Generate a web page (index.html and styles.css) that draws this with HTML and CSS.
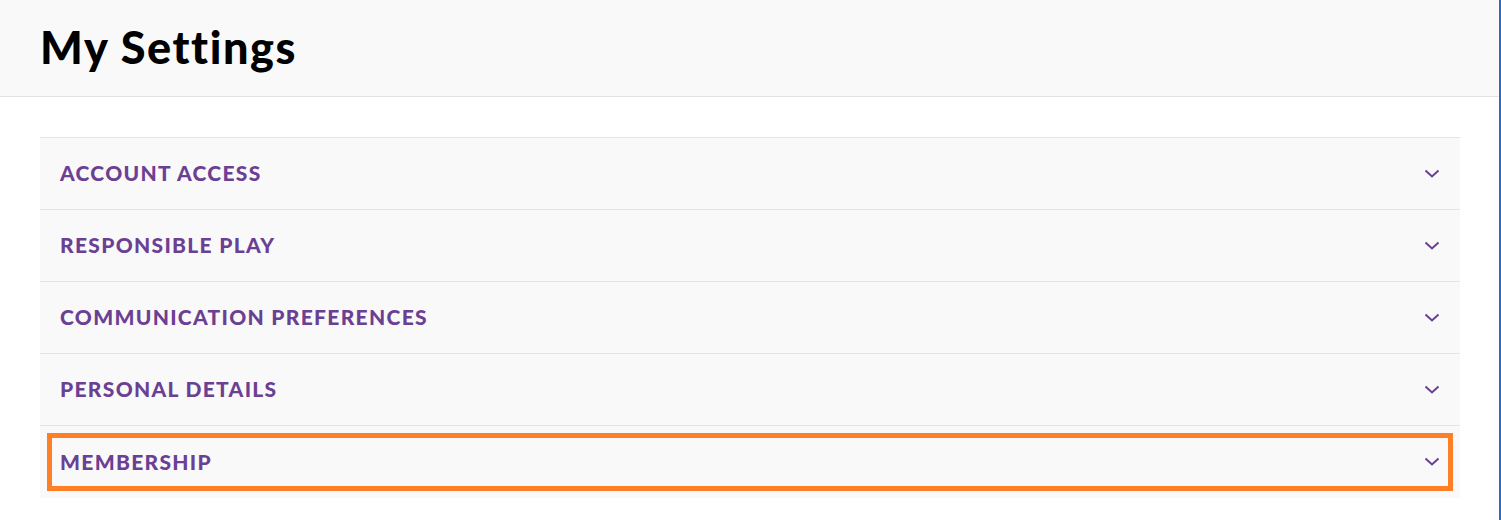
FILE: index.html
```html
<!DOCTYPE html>
<html>
<head>
<meta charset="utf-8">
<link rel="stylesheet" href="styles.css">
</head>
<body>
<div class="page">
  <header class="header">
    <h1 class="title">My Settings</h1>
  </header>
  <main class="content">
    <div class="accordion">
      <div class="row"><span class="label">ACCOUNT ACCESS</span><svg class="chev" viewBox="0 0 16 10"><path d="M1.5 1.5 L8 7.5 L14.5 1.5" /></svg></div>
      <div class="row"><span class="label">RESPONSIBLE PLAY</span><svg class="chev" viewBox="0 0 16 10"><path d="M1.5 1.5 L8 7.5 L14.5 1.5" /></svg></div>
      <div class="row"><span class="label">COMMUNICATION PREFERENCES</span><svg class="chev" viewBox="0 0 16 10"><path d="M1.5 1.5 L8 7.5 L14.5 1.5" /></svg></div>
      <div class="row"><span class="label">PERSONAL DETAILS</span><svg class="chev" viewBox="0 0 16 10"><path d="M1.5 1.5 L8 7.5 L14.5 1.5" /></svg></div>
      <div class="row row-highlight"><span class="label">MEMBERSHIP</span><svg class="chev" viewBox="0 0 16 10"><path d="M1.5 1.5 L8 7.5 L14.5 1.5" /></svg></div>
    </div>
  </main>
</div>
</body>
</html>
```

FILE: styles.css
```css
html, body {
  margin: 0;
  padding: 0;
  background: #ffffff;
}
body {
  font-family: Lato, "Open Sans", sans-serif;
}
.page {
  width: 1499px;
  height: 520px;
  border-right: 2px solid #2a6cbf;
  box-sizing: content-box;
  overflow: hidden;
}
.header {
  height: 96px;
  background: #f9f9f9;
  border-bottom: 1px solid #e2e2e2;
  padding: 0 40px;
  display: flex;
  align-items: center;
}
.title {
  margin: 0;
  font-size: 45px;
  font-weight: 900;
  color: #000000;
  letter-spacing: 1.6px;
  line-height: 1;
  margin-top: -2px;
}
.content {
  padding: 40px 39px 0 40px;
}
.accordion {
  border-top: 1px solid #e4e4e4;
  background: #f9f9f9;
}
.row {
  height: 71px;
  border-bottom: 1px solid #e4e4e4;
  display: flex;
  align-items: center;
  justify-content: space-between;
  padding: 0 20px 0 20px;
}
.row:last-child {
  border-bottom: none;
  height: 72px;
}
.label {
  font-size: 21px;
  font-weight: 900;
  color: #6b3f93;
  letter-spacing: 1.3px;
  margin-top: -2px;
}
.chev {
  width: 16px;
  height: 10px;
  fill: none;
  stroke: #6b3f93;
  stroke-width: 2;
}
.row-highlight {
  outline: 5px solid #ff7f27;
  outline-offset: -12px;
}
```
